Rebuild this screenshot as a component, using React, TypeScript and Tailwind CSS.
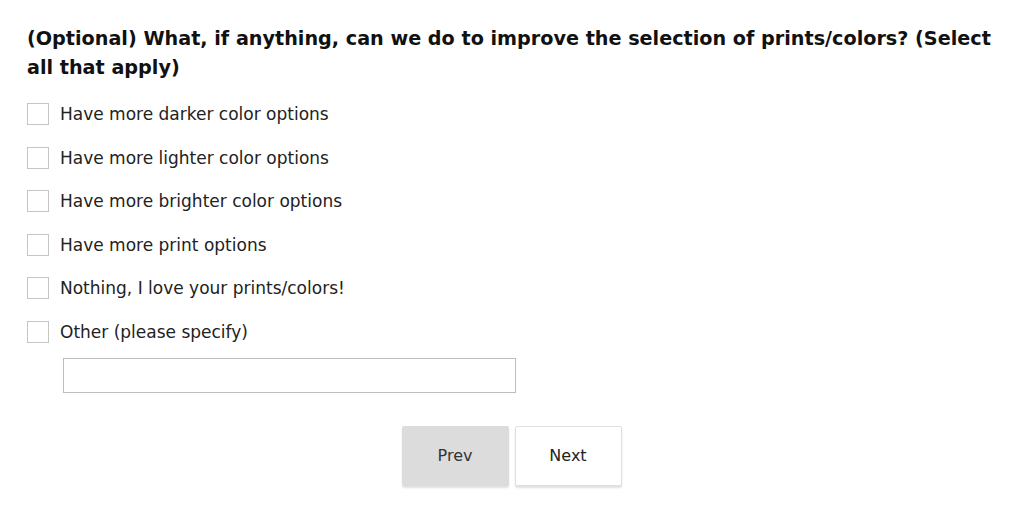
import React from "react";

const options = [
  "Have more darker color options",
  "Have more lighter color options",
  "Have more brighter color options",
  "Have more print options",
  "Nothing, I love your prints/colors!",
  "Other (please specify)",
];

export default function App() {
  return (
    <div className="w-[1024px] h-[516px] bg-white text-black" style={{ fontFamily: '"DejaVu Sans", Verdana, sans-serif' }}>
      <div className="pl-[27px] pr-[20px] pt-[24px]">
        <h1 className="text-[19.2px] font-bold leading-[29px] text-[#111]">
          (Optional) What, if anything, can we do to improve the selection of prints/colors? (Select all that apply)
        </h1>
        <div className="mt-[21px] flex flex-col gap-[21.6px]">
          {options.map((o) => (
            <label key={o} className="flex items-center h-[22px]">
              <span className="w-[22px] h-[22px] border border-[#c5c5c5] bg-white shrink-0" />
              <span className="ml-[11px] text-[17px] text-[#222] leading-[22px]">{o}</span>
            </label>
          ))}
        </div>
        <div className="ml-[36px] mt-[15px] w-[453px] h-[35px] border border-[#bdbdbd] bg-white" />
        <div className="mt-[33px] flex justify-center gap-[6px] pr-[8px]">
          <button className="w-[107px] h-[60px] bg-[#dcdcdc] text-[16px] text-[#333] shadow-[0_2px_2px_rgba(0,0,0,0.12)] rounded-[2px]">
            Prev
          </button>
          <button className="w-[107px] h-[60px] bg-white border border-[#e0e0e0] text-[16px] text-[#222] shadow-[0_2px_2px_rgba(0,0,0,0.12)] rounded-[2px]">
            Next
          </button>
        </div>
      </div>
    </div>
  );
}
